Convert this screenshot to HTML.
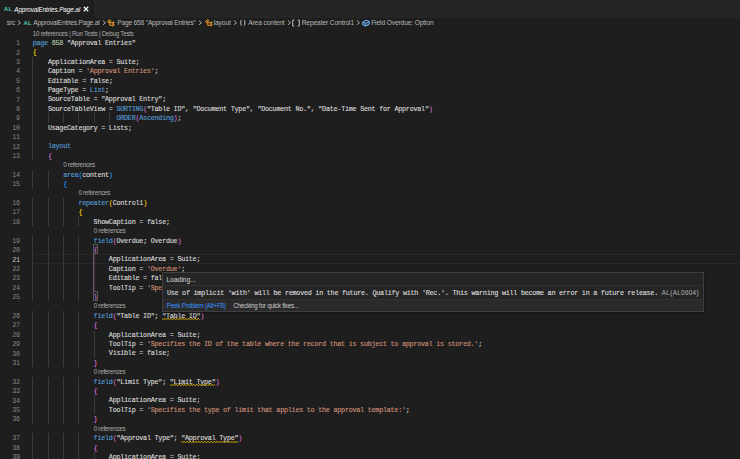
<!DOCTYPE html>
<html><head><meta charset="utf-8"><style>
*{margin:0;padding:0;box-sizing:border-box}
html,body{width:740px;height:459px;overflow:hidden;background:#1e1e1e}
body{position:relative;font-family:"Liberation Sans",sans-serif}
.tabs{position:absolute;left:0;top:0;width:740px;height:18px;background:#252526}
.tab{position:absolute;left:0;top:0;width:94px;height:18px;background:#1e1e1e}
.tab .al{position:absolute;left:4.1px;top:5.9px;font-size:5.9px;font-weight:bold;color:#4ec9b0;letter-spacing:0.1px}
.tab .nm{position:absolute;left:14.3px;top:5.8px;font-size:6.3px;letter-spacing:-0.08px;font-style:italic;color:#ffffff;white-space:nowrap}
.tab .x{position:absolute;left:83px;top:6px;width:6px;height:6px}
.bc{position:absolute;left:0;top:17.3px;height:10.9px;width:740px;font-size:6.6px;color:#b8b8b8;white-space:nowrap}
.bc span{position:absolute;top:1.9px}
.bc .sep{color:#a0a0a0}
.lens{position:absolute;height:9.4px;line-height:9.4px;font-size:6.3px;letter-spacing:-0.27px;color:#ababab;white-space:nowrap;padding-top:0px}
.ln{position:absolute;left:0;width:19.8px;text-align:right;height:9.4px;line-height:9.4px;font-family:"Liberation Mono",monospace;font-size:6.8px;letter-spacing:-0.272px;color:#858585;padding-top:1.2px}
.ln.act{color:#c6c6c6}
.code{position:absolute;left:32.7px;height:9.4px;line-height:9.4px;font-family:"Liberation Mono",monospace;font-size:6.8px;letter-spacing:-0.272px;color:#dadada;white-space:pre;padding-top:1px;-webkit-text-stroke:0.12px currentColor}
.gd{position:absolute;width:1px;height:9.41px;background:#3a3a3a}
.kw{color:#569cd6} .num{color:#b5cea8} .str{color:#ce9178} .id{color:#dadada}
.b0{color:#ffd700} .b1{color:#da70d6} .b2{color:#179fff}
.curline{position:absolute;left:32.5px;width:708px;height:9.4px;border-top:1px solid #282828;border-bottom:1px solid #282828}
.bm{position:absolute;width:4.7px;height:10px;border:1px solid #5a5a5a}
.bpg{position:absolute;width:1px;background:#70506f}
.sq{position:absolute;height:1.5px;border-bottom:1px dotted #cca700}
.hover{position:absolute;left:162px;top:272px;width:542px;height:39.5px;background:#252526;border:1px solid #3f3f3f;overflow:hidden;box-shadow:0 1px 3px rgba(0,0,0,0.4)}
.hover .r1{position:absolute;left:0;top:0;width:100%;height:13px;border-bottom:1px solid #303030}
.hover .r1 span{position:absolute;left:3.5px;top:2.9px;font-size:6.7px;color:#d6d6d6}
.hover .r2{position:absolute;left:3.9px;top:13px;height:14.6px;line-height:14.6px;font-family:"Liberation Mono",monospace;font-size:6.8px;letter-spacing:-0.272px;color:#dcdcdc;white-space:pre;padding-top:0px;-webkit-text-stroke:0.12px currentColor}
.hover .r2 .cr{font-family:"Liberation Sans",sans-serif;font-size:6.4px;letter-spacing:0.3px;color:#a0a0a0}
.hover .r3{position:absolute;left:0;top:25.8px;width:100%;height:12.2px;background:#2a2a2a;border-top:1px solid #303030;font-size:6.3px;letter-spacing:-0.24px;white-space:nowrap}
.hover .r3 .pk{position:absolute;left:3.8px;top:2.3px;color:#3794ff}
.hover .r3 .ck{position:absolute;left:70.2px;top:2.3px;color:#cccccc}
</style></head><body>
<div class="tabs"><div class="tab"><span class="al">AL</span><span class="nm">ApprovalEntries.Page.al</span>
<svg class="x" viewBox="0 0 6 6"><path d="M0.8 0.8L5.2 5.2M5.2 0.8L0.8 5.2" stroke="#f4f4f4" stroke-width="1.25"/></svg></div></div>
<div class="bc">
<span style="left:6.7px;letter-spacing:-0.1px">src</span>
<svg style="position:absolute;left:16.6px;top:2.6px" width="4.6" height="5.4" viewBox="0 0 4.6 5.4"><path d="M0.9 0.5L3.5 2.7L0.9 4.9" fill="none" stroke="#bdbdbd" stroke-width="0.9"/></svg>
<span style="left:23.6px;color:#4ec9b0;font-weight:bold;font-size:6px;top:3px">AL</span>
<span style="left:33.3px;letter-spacing:-0.2px">ApprovalEntries.Page.al</span>
<svg style="position:absolute;left:101.9px;top:2.6px" width="4.6" height="5.4" viewBox="0 0 4.6 5.4"><path d="M0.9 0.5L3.5 2.7L0.9 4.9" fill="none" stroke="#bdbdbd" stroke-width="0.9"/></svg>
<span style="left:117.2px;letter-spacing:-0.17px">Page 658 "Approval Entries"</span>
<svg style="position:absolute;left:198.3px;top:2.6px" width="4.6" height="5.4" viewBox="0 0 4.6 5.4"><path d="M0.9 0.5L3.5 2.7L0.9 4.9" fill="none" stroke="#bdbdbd" stroke-width="0.9"/></svg>
<span style="left:213.7px;letter-spacing:-0.1px">layout</span>
<svg style="position:absolute;left:233.2px;top:2.6px" width="4.6" height="5.4" viewBox="0 0 4.6 5.4"><path d="M0.9 0.5L3.5 2.7L0.9 4.9" fill="none" stroke="#bdbdbd" stroke-width="0.9"/></svg>
<span style="left:248.2px;letter-spacing:-0.08px">Area content</span>
<svg style="position:absolute;left:287.4px;top:2.6px" width="4.6" height="5.4" viewBox="0 0 4.6 5.4"><path d="M0.9 0.5L3.5 2.7L0.9 4.9" fill="none" stroke="#bdbdbd" stroke-width="0.9"/></svg>
<span style="left:301.7px;letter-spacing:-0.09px">Repeater Control1</span>
<svg style="position:absolute;left:356.2px;top:2.6px" width="4.6" height="5.4" viewBox="0 0 4.6 5.4"><path d="M0.9 0.5L3.5 2.7L0.9 4.9" fill="none" stroke="#bdbdbd" stroke-width="0.9"/></svg>
<span style="left:371.2px;letter-spacing:-0.1px">Field Overdue: Option</span>
<svg width="8" height="8" viewBox="0 0 16 16" style="position:absolute;left:107.3px;top:1.5px"><path fill="#ee9d28" stroke="#ee9d28" stroke-width="0.9" d="M11.34 9.71h.71l2.67-2.67v-.71L13.38 5h-.7l-1.82 1.81h-5V5.56l1.86-1.85V3l-2-2H5L1 5v.71l2 2h.71l1.14-1.15v5.79l.5.5H10v.52l1.33 1.34h.71l2.67-2.67v-.71L13.37 10h-.7l-1.86 1.85h-5v-4H10v.48l1.34 1.38zm1.69-3.65l.63.63-2 2-.63-.63 2-2zm0 5l.63.63-2 2-.63-.63 2-2zM3.35 6.65l-1.29-1.3 3.29-3.29 1.3 1.29-3.3 3.3z"/></svg><svg width="8" height="8" viewBox="0 0 16 16" style="position:absolute;left:204.5px;top:1.5px"><path fill="#ee9d28" stroke="#ee9d28" stroke-width="0.9" d="M11.34 9.71h.71l2.67-2.67v-.71L13.38 5h-.7l-1.82 1.81h-5V5.56l1.86-1.85V3l-2-2H5L1 5v.71l2 2h.71l1.14-1.15v5.79l.5.5H10v.52l1.33 1.34h.71l2.67-2.67v-.71L13.37 10h-.7l-1.86 1.85h-5v-4H10v.48l1.34 1.38zm1.69-3.65l.63.63-2 2-.63-.63 2-2zm0 5l.63.63-2 2-.63-.63 2-2zM3.35 6.65l-1.29-1.3 3.29-3.29 1.3 1.29-3.3 3.3z"/></svg><svg width="7.5" height="7.5" viewBox="0 0 16 16" style="position:absolute;left:238.9px;top:1.7px"><path fill="none" stroke="#d0d0d0" stroke-width="2" d="M5.5 2.5C3.5 2.5 4 4 4 6S3 8 2.5 8C3 8 4 8 4 10S3.5 13.5 5.5 13.5M10.5 2.5C12.5 2.5 12 4 12 6S13 8 13.5 8C13 8 12 8 12 10S12.5 13.5 10.5 13.5"/></svg><svg width="8" height="8" viewBox="0 0 16 16" style="position:absolute;left:292px;top:1.6px"><path fill="none" stroke="#d0d0d0" stroke-width="1.8" d="M4.5 2H1.5V14H4.5M11.5 2H14.5V14H11.5"/></svg><svg width="8" height="8" viewBox="0 0 16 16" style="position:absolute;left:361.7px;top:1.5px"><path fill="#75beff" stroke="#75beff" stroke-width="0.9" d="M14.45 4.5l-5-2.5h-.9l-7 3.5-.55.89v4.5l.55.9 5 2.5h.9l7-3.5.55-.9v-4.5l-.55-.89zm-8 8.64l-4.5-2.25V7.17l4.5 2v3.97zm.5-4.8L2.29 6.23l6.66-3.34 4.67 2.34-6.67 3.11zm7 1.55l-6.5 3.25V9.21l6.5-3v3.68z"/></svg>
</div>
<div class="curline" style="top:254.34px"></div>
<div class="lens" style="top:28.50px;left:32.70px">10 references | Run Tests | Debug Tests</div>
<div class="ln" style="top:37.91px">1</div>
<div class="code" style="top:37.91px"><span class="kw">page</span> <span class="num">658</span> <span class="id">&quot;Approval Entries&quot;</span></div>
<div class="ln" style="top:47.32px">2</div>
<div class="code" style="top:47.32px"><span class="b0">{</span></div>
<div class="gd" style="top:56.73px;left:32.30px"></div>
<div class="ln" style="top:56.73px">3</div>
<div class="code" style="top:56.73px">    <span class="tx">ApplicationArea</span> <span class="tx">=</span> <span class="tx">Suite</span><span class="tx">;</span></div>
<div class="gd" style="top:66.14px;left:32.30px"></div>
<div class="ln" style="top:66.14px">4</div>
<div class="code" style="top:66.14px">    <span class="tx">Caption</span> <span class="tx">=</span> <span class="str">&#x27;Approval Entries&#x27;</span><span class="tx">;</span></div>
<div class="gd" style="top:75.55px;left:32.30px"></div>
<div class="ln" style="top:75.55px">5</div>
<div class="code" style="top:75.55px">    <span class="tx">Editable</span> <span class="tx">=</span> <span class="tx">false</span><span class="tx">;</span></div>
<div class="gd" style="top:84.96px;left:32.30px"></div>
<div class="ln" style="top:84.96px">6</div>
<div class="code" style="top:84.96px">    <span class="tx">PageType</span> <span class="tx">=</span> <span class="kw">List</span><span class="tx">;</span></div>
<div class="gd" style="top:94.37px;left:32.30px"></div>
<div class="ln" style="top:94.37px">7</div>
<div class="code" style="top:94.37px">    <span class="tx">SourceTable</span> <span class="tx">=</span> <span class="id">&quot;Approval Entry&quot;</span><span class="tx">;</span></div>
<div class="gd" style="top:103.78px;left:32.30px"></div>
<div class="ln" style="top:103.78px">8</div>
<div class="code" style="top:103.78px">    <span class="tx">SourceTableView</span> <span class="tx">=</span> <span class="kw">SORTING</span><span class="b1">(</span><span class="id">&quot;Table ID&quot;</span><span class="tx">,</span> <span class="id">&quot;Document Type&quot;</span><span class="tx">,</span> <span class="id">&quot;Document No.&quot;</span><span class="tx">,</span> <span class="id">&quot;Date-Time Sent for Approval&quot;</span><span class="b1">)</span></div>
<div class="gd" style="top:113.19px;left:32.30px"></div>
<div class="gd" style="top:113.19px;left:47.93px"></div>
<div class="gd" style="top:113.19px;left:63.16px"></div>
<div class="gd" style="top:113.19px;left:78.40px"></div>
<div class="gd" style="top:113.19px;left:93.63px"></div>
<div class="gd" style="top:113.19px;left:108.86px"></div>
<div class="ln" style="top:113.19px">9</div>
<div class="code" style="top:113.19px">                      <span class="kw">ORDER</span><span class="b1">(</span><span class="kw">Ascending</span><span class="b1">)</span><span class="tx">;</span></div>
<div class="gd" style="top:122.60px;left:32.30px"></div>
<div class="ln" style="top:122.60px">10</div>
<div class="code" style="top:122.60px">    <span class="tx">UsageCategory</span> <span class="tx">=</span> <span class="tx">Lists</span><span class="tx">;</span></div>
<div class="gd" style="top:132.01px;left:32.30px"></div>
<div class="ln" style="top:132.01px">11</div>
<div class="code" style="top:132.01px"></div>
<div class="gd" style="top:141.42px;left:32.30px"></div>
<div class="ln" style="top:141.42px">12</div>
<div class="code" style="top:141.42px">    <span class="kw">layout</span></div>
<div class="gd" style="top:150.83px;left:32.30px"></div>
<div class="ln" style="top:150.83px">13</div>
<div class="code" style="top:150.83px">    <span class="b1">{</span></div>
<div class="lens" style="top:160.24px;left:63.16px">0 references</div>
<div class="gd" style="top:169.65px;left:32.30px"></div>
<div class="gd" style="top:169.65px;left:47.93px"></div>
<div class="ln" style="top:169.65px">14</div>
<div class="code" style="top:169.65px">        <span class="kw">area</span><span class="b2">(</span><span class="tx">content</span><span class="b2">)</span></div>
<div class="gd" style="top:179.06px;left:32.30px"></div>
<div class="gd" style="top:179.06px;left:47.93px"></div>
<div class="ln" style="top:179.06px">15</div>
<div class="code" style="top:179.06px">        <span class="b2">{</span></div>
<div class="lens" style="top:188.47px;left:78.40px">0 references</div>
<div class="gd" style="top:197.88px;left:32.30px"></div>
<div class="gd" style="top:197.88px;left:47.93px"></div>
<div class="gd" style="top:197.88px;left:63.16px"></div>
<div class="ln" style="top:197.88px">16</div>
<div class="code" style="top:197.88px">            <span class="kw">repeater</span><span class="b0">(</span><span class="tx">Control1</span><span class="b0">)</span></div>
<div class="gd" style="top:207.29px;left:32.30px"></div>
<div class="gd" style="top:207.29px;left:47.93px"></div>
<div class="gd" style="top:207.29px;left:63.16px"></div>
<div class="ln" style="top:207.29px">17</div>
<div class="code" style="top:207.29px">            <span class="b0">{</span></div>
<div class="gd" style="top:216.70px;left:32.30px"></div>
<div class="gd" style="top:216.70px;left:47.93px"></div>
<div class="gd" style="top:216.70px;left:63.16px"></div>
<div class="gd" style="top:216.70px;left:78.40px"></div>
<div class="ln" style="top:216.70px">18</div>
<div class="code" style="top:216.70px">                <span class="tx">ShowCaption</span> <span class="tx">=</span> <span class="tx">false</span><span class="tx">;</span></div>
<div class="lens" style="top:226.11px;left:93.63px">0 references</div>
<div class="gd" style="top:235.52px;left:32.30px"></div>
<div class="gd" style="top:235.52px;left:47.93px"></div>
<div class="gd" style="top:235.52px;left:63.16px"></div>
<div class="gd" style="top:235.52px;left:78.40px"></div>
<div class="ln" style="top:235.52px">19</div>
<div class="code" style="top:235.52px">                <span class="kw">field</span><span class="b1">(</span><span class="tx">Overdue</span><span class="tx">;</span> <span class="tx">Overdue</span><span class="b1">)</span></div>
<div class="gd" style="top:244.93px;left:32.30px"></div>
<div class="gd" style="top:244.93px;left:47.93px"></div>
<div class="gd" style="top:244.93px;left:63.16px"></div>
<div class="gd" style="top:244.93px;left:78.40px"></div>
<div class="ln" style="top:244.93px">20</div>
<div class="code" style="top:244.93px">                <span class="b1">{</span></div>
<div class="gd" style="top:254.34px;left:32.30px"></div>
<div class="gd" style="top:254.34px;left:47.93px"></div>
<div class="gd" style="top:254.34px;left:63.16px"></div>
<div class="gd" style="top:254.34px;left:78.40px"></div>
<div class="gd" style="top:254.34px;left:93.63px"></div>
<div class="ln act" style="top:254.34px">21</div>
<div class="code" style="top:254.34px">                    <span class="tx">ApplicationArea</span> <span class="tx">=</span> <span class="tx">Suite</span><span class="tx">;</span></div>
<div class="gd" style="top:263.75px;left:32.30px"></div>
<div class="gd" style="top:263.75px;left:47.93px"></div>
<div class="gd" style="top:263.75px;left:63.16px"></div>
<div class="gd" style="top:263.75px;left:78.40px"></div>
<div class="gd" style="top:263.75px;left:93.63px"></div>
<div class="ln" style="top:263.75px">22</div>
<div class="code" style="top:263.75px">                    <span class="tx">Caption</span> <span class="tx">=</span> <span class="str">&#x27;Overdue&#x27;</span><span class="tx">;</span></div>
<div class="gd" style="top:273.16px;left:32.30px"></div>
<div class="gd" style="top:273.16px;left:47.93px"></div>
<div class="gd" style="top:273.16px;left:63.16px"></div>
<div class="gd" style="top:273.16px;left:78.40px"></div>
<div class="gd" style="top:273.16px;left:93.63px"></div>
<div class="ln" style="top:273.16px">23</div>
<div class="code" style="top:273.16px">                    <span class="tx">Editable</span> <span class="tx">=</span> <span class="tx">false</span><span class="tx">;</span></div>
<div class="gd" style="top:282.57px;left:32.30px"></div>
<div class="gd" style="top:282.57px;left:47.93px"></div>
<div class="gd" style="top:282.57px;left:63.16px"></div>
<div class="gd" style="top:282.57px;left:78.40px"></div>
<div class="gd" style="top:282.57px;left:93.63px"></div>
<div class="ln" style="top:282.57px">24</div>
<div class="code" style="top:282.57px">                    <span class="tx">ToolTip</span> <span class="tx">=</span> <span class="str">&#x27;Specifies whether the approval is overdue.&#x27;</span><span class="tx">;</span></div>
<div class="gd" style="top:291.98px;left:32.30px"></div>
<div class="gd" style="top:291.98px;left:47.93px"></div>
<div class="gd" style="top:291.98px;left:63.16px"></div>
<div class="gd" style="top:291.98px;left:78.40px"></div>
<div class="ln" style="top:291.98px">25</div>
<div class="code" style="top:291.98px">                <span class="b1">}</span></div>
<div class="lens" style="top:301.39px;left:93.63px">0 references</div>
<div class="gd" style="top:310.80px;left:32.30px"></div>
<div class="gd" style="top:310.80px;left:47.93px"></div>
<div class="gd" style="top:310.80px;left:63.16px"></div>
<div class="gd" style="top:310.80px;left:78.40px"></div>
<div class="ln" style="top:310.80px">26</div>
<div class="code" style="top:310.80px">                <span class="kw">field</span><span class="b1">(</span><span class="id">&quot;Table ID&quot;</span><span class="tx">;</span> <span class="id">&quot;Table ID&quot;</span><span class="b1">)</span></div>
<div class="gd" style="top:320.21px;left:32.30px"></div>
<div class="gd" style="top:320.21px;left:47.93px"></div>
<div class="gd" style="top:320.21px;left:63.16px"></div>
<div class="gd" style="top:320.21px;left:78.40px"></div>
<div class="ln" style="top:320.21px">27</div>
<div class="code" style="top:320.21px">                <span class="b1">{</span></div>
<div class="gd" style="top:329.62px;left:32.30px"></div>
<div class="gd" style="top:329.62px;left:47.93px"></div>
<div class="gd" style="top:329.62px;left:63.16px"></div>
<div class="gd" style="top:329.62px;left:78.40px"></div>
<div class="gd" style="top:329.62px;left:93.63px"></div>
<div class="ln" style="top:329.62px">28</div>
<div class="code" style="top:329.62px">                    <span class="tx">ApplicationArea</span> <span class="tx">=</span> <span class="tx">Suite</span><span class="tx">;</span></div>
<div class="gd" style="top:339.03px;left:32.30px"></div>
<div class="gd" style="top:339.03px;left:47.93px"></div>
<div class="gd" style="top:339.03px;left:63.16px"></div>
<div class="gd" style="top:339.03px;left:78.40px"></div>
<div class="gd" style="top:339.03px;left:93.63px"></div>
<div class="ln" style="top:339.03px">29</div>
<div class="code" style="top:339.03px">                    <span class="tx">ToolTip</span> <span class="tx">=</span> <span class="str">&#x27;Specifies the ID of the table where the record that is subject to approval is stored.&#x27;</span><span class="tx">;</span></div>
<div class="gd" style="top:348.44px;left:32.30px"></div>
<div class="gd" style="top:348.44px;left:47.93px"></div>
<div class="gd" style="top:348.44px;left:63.16px"></div>
<div class="gd" style="top:348.44px;left:78.40px"></div>
<div class="gd" style="top:348.44px;left:93.63px"></div>
<div class="ln" style="top:348.44px">30</div>
<div class="code" style="top:348.44px">                    <span class="tx">Visible</span> <span class="tx">=</span> <span class="tx">false</span><span class="tx">;</span></div>
<div class="gd" style="top:357.85px;left:32.30px"></div>
<div class="gd" style="top:357.85px;left:47.93px"></div>
<div class="gd" style="top:357.85px;left:63.16px"></div>
<div class="gd" style="top:357.85px;left:78.40px"></div>
<div class="ln" style="top:357.85px">31</div>
<div class="code" style="top:357.85px">                <span class="b1">}</span></div>
<div class="lens" style="top:367.26px;left:93.63px">0 references</div>
<div class="gd" style="top:376.67px;left:32.30px"></div>
<div class="gd" style="top:376.67px;left:47.93px"></div>
<div class="gd" style="top:376.67px;left:63.16px"></div>
<div class="gd" style="top:376.67px;left:78.40px"></div>
<div class="ln" style="top:376.67px">32</div>
<div class="code" style="top:376.67px">                <span class="kw">field</span><span class="b1">(</span><span class="id">&quot;Limit Type&quot;</span><span class="tx">;</span> <span class="id">&quot;Limit Type&quot;</span><span class="b1">)</span></div>
<div class="gd" style="top:386.08px;left:32.30px"></div>
<div class="gd" style="top:386.08px;left:47.93px"></div>
<div class="gd" style="top:386.08px;left:63.16px"></div>
<div class="gd" style="top:386.08px;left:78.40px"></div>
<div class="ln" style="top:386.08px">33</div>
<div class="code" style="top:386.08px">                <span class="b1">{</span></div>
<div class="gd" style="top:395.49px;left:32.30px"></div>
<div class="gd" style="top:395.49px;left:47.93px"></div>
<div class="gd" style="top:395.49px;left:63.16px"></div>
<div class="gd" style="top:395.49px;left:78.40px"></div>
<div class="gd" style="top:395.49px;left:93.63px"></div>
<div class="ln" style="top:395.49px">34</div>
<div class="code" style="top:395.49px">                    <span class="tx">ApplicationArea</span> <span class="tx">=</span> <span class="tx">Suite</span><span class="tx">;</span></div>
<div class="gd" style="top:404.90px;left:32.30px"></div>
<div class="gd" style="top:404.90px;left:47.93px"></div>
<div class="gd" style="top:404.90px;left:63.16px"></div>
<div class="gd" style="top:404.90px;left:78.40px"></div>
<div class="gd" style="top:404.90px;left:93.63px"></div>
<div class="ln" style="top:404.90px">35</div>
<div class="code" style="top:404.90px">                    <span class="tx">ToolTip</span> <span class="tx">=</span> <span class="str">&#x27;Specifies the type of limit that applies to the approval template:&#x27;</span><span class="tx">;</span></div>
<div class="gd" style="top:414.31px;left:32.30px"></div>
<div class="gd" style="top:414.31px;left:47.93px"></div>
<div class="gd" style="top:414.31px;left:63.16px"></div>
<div class="gd" style="top:414.31px;left:78.40px"></div>
<div class="ln" style="top:414.31px">36</div>
<div class="code" style="top:414.31px">                <span class="b1">}</span></div>
<div class="lens" style="top:423.72px;left:93.63px">0 references</div>
<div class="gd" style="top:433.13px;left:32.30px"></div>
<div class="gd" style="top:433.13px;left:47.93px"></div>
<div class="gd" style="top:433.13px;left:63.16px"></div>
<div class="gd" style="top:433.13px;left:78.40px"></div>
<div class="ln" style="top:433.13px">37</div>
<div class="code" style="top:433.13px">                <span class="kw">field</span><span class="b1">(</span><span class="id">&quot;Approval Type&quot;</span><span class="tx">;</span> <span class="id">&quot;Approval Type&quot;</span><span class="b1">)</span></div>
<div class="gd" style="top:442.54px;left:32.30px"></div>
<div class="gd" style="top:442.54px;left:47.93px"></div>
<div class="gd" style="top:442.54px;left:63.16px"></div>
<div class="gd" style="top:442.54px;left:78.40px"></div>
<div class="ln" style="top:442.54px">38</div>
<div class="code" style="top:442.54px">                <span class="b1">{</span></div>
<div class="gd" style="top:451.95px;left:32.30px"></div>
<div class="gd" style="top:451.95px;left:47.93px"></div>
<div class="gd" style="top:451.95px;left:63.16px"></div>
<div class="gd" style="top:451.95px;left:78.40px"></div>
<div class="gd" style="top:451.95px;left:93.63px"></div>
<div class="ln" style="top:451.95px">39</div>
<div class="code" style="top:451.95px">                    <span class="tx">ApplicationArea</span> <span class="tx">=</span> <span class="tx">Suite</span><span class="tx">;</span></div>
<div class="bm" style="top:243.83px;left:93.03px"></div><div class="bm" style="top:290.88px;left:93.03px"></div>
<div class="bpg" style="top:253.24px;left:93.3px;height:37.64px"></div>
<svg style="position:absolute;top:318.41px;left:162.17px" width="38.08" height="2"><polyline fill="none" stroke="#d4ad00" stroke-width="1" points="0.00,0.40 1.50,1.60 3.00,0.40 4.50,1.60 6.00,0.40 7.50,1.60 9.00,0.40 10.50,1.60 12.00,0.40 13.50,1.60 15.00,0.40 16.50,1.60 18.00,0.40 19.50,1.60 21.00,0.40 22.50,1.60 24.00,0.40 25.50,1.60 27.00,0.40 28.50,1.60 30.00,0.40 31.50,1.60 33.00,0.40 34.50,1.60 36.00,0.40 37.50,1.60"/></svg>
<svg style="position:absolute;top:384.28px;left:169.79px" width="45.70" height="2"><polyline fill="none" stroke="#d4ad00" stroke-width="1" points="0.00,0.40 1.50,1.60 3.00,0.40 4.50,1.60 6.00,0.40 7.50,1.60 9.00,0.40 10.50,1.60 12.00,0.40 13.50,1.60 15.00,0.40 16.50,1.60 18.00,0.40 19.50,1.60 21.00,0.40 22.50,1.60 24.00,0.40 25.50,1.60 27.00,0.40 28.50,1.60 30.00,0.40 31.50,1.60 33.00,0.40 34.50,1.60 36.00,0.40 37.50,1.60 39.00,0.40 40.50,1.60 42.00,0.40 43.50,1.60 45.00,0.40"/></svg>
<svg style="position:absolute;top:440.74px;left:181.21px" width="57.12" height="2"><polyline fill="none" stroke="#d4ad00" stroke-width="1" points="0.00,0.40 1.50,1.60 3.00,0.40 4.50,1.60 6.00,0.40 7.50,1.60 9.00,0.40 10.50,1.60 12.00,0.40 13.50,1.60 15.00,0.40 16.50,1.60 18.00,0.40 19.50,1.60 21.00,0.40 22.50,1.60 24.00,0.40 25.50,1.60 27.00,0.40 28.50,1.60 30.00,0.40 31.50,1.60 33.00,0.40 34.50,1.60 36.00,0.40 37.50,1.60 39.00,0.40 40.50,1.60 42.00,0.40 43.50,1.60 45.00,0.40 46.50,1.60 48.00,0.40 49.50,1.60 51.00,0.40 52.50,1.60 54.00,0.40 55.50,1.60 57.00,0.40"/></svg>
<div class="hover">
<div class="r1"><span>Loading...</span></div>
<div class="r2">Use of implicit 'with' will be removed in the future. Qualify with 'Rec.'. This warning will become an error in a future release. <span class="cr">AL(AL0604)</span></div>
<div class="r3"><span class="pk">Peek Problem (Alt+F8)</span><span class="ck">Checking for quick fixes...</span></div>
</div>
</body></html>
